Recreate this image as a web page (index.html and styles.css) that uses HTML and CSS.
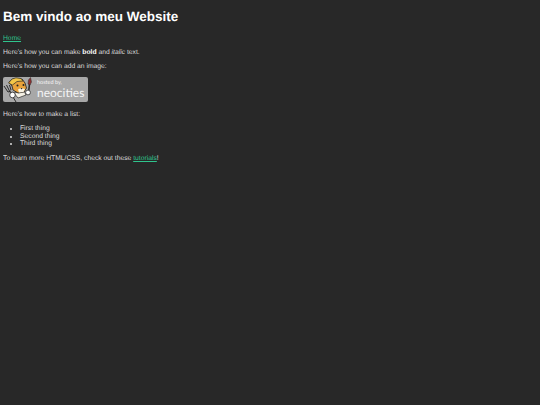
FILE: index.html
```html
<!DOCTYPE html>
<html>
    <head>
        <meta charset="utf-8">
        <link rel="stylesheet" href="styles.css">
        <title>Bem vindo ao meu Website</title>
    </head>
    <body>
        <h1>Bem vindo ao meu Website</h1>

        <p><a href="#">Home</a></p>

        <p>Here's how you can make <strong>bold</strong> and <em>italic</em> text.</p>

        <p>Here's how you can add an image:</p>

        <div class="badge">
            <svg class="badge-cat" viewBox="0 0 32 25" width="32" height="25">
                <!-- fork -->
                <path d="M1 9 L5 15 M3.5 8 L6.5 14 M6.5 8 L8 13 M5 15 L8 14 M7 15 L13 25" stroke="#2a2a2a" stroke-width="1" fill="none"/>
                <!-- brush -->
                <path d="M26.5 7 L25.5 16" stroke="#2a2a2a" stroke-width="1.6"/>
                <path d="M27.5 0.5 L28.5 5 L27 8 L25 7 L25.5 3 Z" fill="#8e3030" stroke="#2a2a2a" stroke-width="0.5"/>
                <!-- body -->
                <path d="M11 16 L21 14 L23 18 L15 21 Z" fill="#f4f0e4" stroke="#2a2a2a" stroke-width="0.7"/>
                <!-- head -->
                <path d="M6 5 L9 9 L10 13 L15 16 L21 15 L23.5 11 L22 6 L19 2 L10 2 Z" fill="#e8a23a" stroke="#2a2a2a" stroke-width="0.9"/>
                <!-- helmet -->
                <path d="M5.5 6 L9 2 L13 0.8 L18 1.5 L20 4 L14 4.5 L9.5 8 Z" fill="#f2c648" stroke="#2a2a2a" stroke-width="0.7"/>
                <path d="M15 12.5 L18 11 L22 12 L20.5 15 L16 15.5 Z" fill="#f7f1e2"/>
                <circle cx="14.5" cy="8.5" r="1" fill="#222"/>
                <circle cx="20.5" cy="8" r="1" fill="#222"/>
                <path d="M17.5 11 L19.5 11 L18.5 12.5 Z" fill="#222"/>
                <!-- paws -->
                <circle cx="9.5" cy="18" r="2.8" fill="#fff" stroke="#2a2a2a" stroke-width="0.8"/>
                <circle cx="25" cy="15.5" r="2.4" fill="#fff" stroke="#2a2a2a" stroke-width="0.8"/>
            </svg>
            <div class="badge-text">
                <span class="badge-hosted">hosted by,</span>
                <span class="badge-name">neocities</span>
            </div>
        </div>

        <p>Here's how to make a list:</p>

        <ul>
            <li>First thing</li>
            <li>Second thing</li>
            <li>Third thing</li>
        </ul>

        <p>To learn more HTML/CSS, check out these <a href="#">tutorials</a>!</p>
    </body>
</html>
```

FILE: styles.css
```css
body {
    margin: 3px;
    background-color: #282828;
    color: #dcdcdc;
    font-family: "Liberation Sans", Arial, sans-serif;
    font-size: 6.75px;
    text-rendering: geometricPrecision;
}

h1 {
    margin: 6px 0 11px;
    color: #ffffff;
    font-size: 13.5px;
}

p {
    margin: 7px 0;
}

a {
    color: #2fc48d;
}

strong {
    color: #ffffff;
}

ul {
    margin: 7px 0;
    padding-left: 17px;
    line-height: 7.5px;
}

.badge {
    display: flex;
    align-items: center;
    width: 85px;
    height: 25px;
    margin-bottom: 9px;
    background-color: #a8a8a8;
    border-radius: 2px;
}

.badge-cat {
    flex-shrink: 0;
}

.badge-text {
    display: flex;
    flex-direction: column;
    margin-left: 2px;
    margin-top: 1px;
    color: #f4f4f4;
    font-family: "Lato", sans-serif;
}

.badge-hosted {
    font-size: 5.5px;
    line-height: 6.6px;
}

.badge-name {
    font-size: 12px;
    line-height: 14.4px;
}
```
